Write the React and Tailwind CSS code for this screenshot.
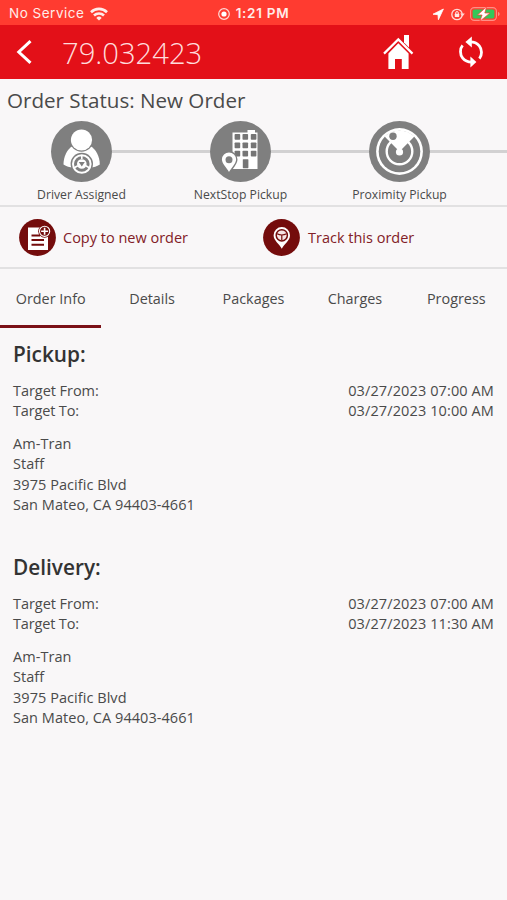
import React, { useState } from 'react';

const steps = [
    { label: "Driver Assigned", Icon: DriverIcon },
    { label: "NextStop Pickup", Icon: BuildingIcon },
    { label: "Proximity Pickup", Icon: RadarIcon },
];

const tabs = ["Order Info", "Details", "Packages", "Charges", "Progress"];

const address = ["Am-Tran", "Staff", "3975 Pacific Blvd", "San Mateo, CA 94403-4661"];

const stops = [
    { title: "Pickup:", from: "03/27/2023 07:00 AM", to: "03/27/2023 10:00 AM", address },
    { title: "Delivery:", from: "03/27/2023 07:00 AM", to: "03/27/2023 11:30 AM", address },
];

function WifiIcon() {
    return (
        <svg className="h-[14px] w-[18px]" viewBox="0 0 18 14" fill="none" stroke="#ffece9" strokeWidth="2.6">
            <path d="M1 5.2a11.4 11.4 0 0 1 16 0" />
            <path d="M4 8.5a7.2 7.2 0 0 1 10 0" />
            <path d="M9 13.6 6.3 10.9a3.8 3.8 0 0 1 5.4 0z" fill="#ffece9" stroke="none" />
        </svg>
    );
}

function StatusRightIcons() {
    return (
        <svg className="h-[16px] w-[68px]" viewBox="0 0 68 16" fill="none">
            <path d="M1 8.2 11.4 3 6.4 13.7 6 8.7z" fill="#fff" stroke="#fff" strokeWidth=".8" />
            <circle cx="25" cy="8.5" r="5.2" stroke="#ffd9d5" strokeWidth="1.3" />
            <path d="M28.2 7.6h4.6l-2.3 2.8z" fill="#ffd9d5" />
            <rect x="22.8" y="7.8" width="4.4" height="3.2" rx=".5" fill="#ffe9e6" />
            <path d="M23.7 8V6.9a1.3 1.3 0 0 1 2.6 0V8" stroke="#ffe9e6" />
            <rect x="38.6" y="1.6" width="25.8" height="12.8" rx="3.6" stroke="#ff8f86" strokeWidth="1.1" />
            <rect x="40.6" y="3.4" width="21.8" height="9.2" rx="1.8" fill="#34c759" />
            <path d="M66 6v4c1.1-.4 1.6-1.1 1.6-2s-.5-1.6-1.6-2z" fill="#ff8f86" />
            <path d="M54.6.8 45.5 9h4.6l-2.2 6.2L58 7h-5.2z" fill="#fff" stroke="#ff3b30" strokeWidth=".7" />
        </svg>
    );
}

function HomeIcon() {
    return (
        <svg className="h-[36px] w-[32px]" viewBox="0 0 32 36" fill="#fff">
            <path d="M22 1h5v12.400l-5-5z" />
            <path d="M2 19.600 16.300 5.400l14.200 14.200" fill="none" stroke="#fff" strokeWidth="2.200" />
            <path d="M16.300 9.200 26.600 19.600V35h-6.800V25h-6.800v10H6.400V19.600z" />
        </svg>
    );
}

function RefreshIcon() {
    return (
        <svg className="h-[32px] w-[26px]" viewBox="0 0 26 32" fill="none" stroke="#fff" strokeWidth="2.8">
            <path d="M4.600 9.400C1.800 12.600 1.800 18.600 4.700 22.200c2.200 2.700 5.300 4 9.300 3.900" />
            <path d="M12 5.900c4 0 7.100 1.300 9.300 3.900 2.900 3.600 2.900 9.500.1 12.800" />
            <path d="M13.800.600v10.800L7.400 6z" fill="#fff" stroke="none" />
            <path d="M12.400 20.600v10.800l6-5.400z" fill="#fff" stroke="none" />
        </svg>
    );
}

function DriverIcon() {
    return (
        <svg className="block h-[61px] w-[61px]" viewBox="0 0 61 61">
            <circle cx="30.5" cy="30.5" r="30.5" fill="#7f7f7f" />
            <path d="M12.500 43.500c0-8 3.500-15.500 9.500-18.800h17c6 3.300 9.800 10.800 9.800 18.800-3 1.900-6 2.800-9.300 3H22c-3.500-.2-6.500-1.100-9.500-3z" fill="#fff" />
            <circle cx="30.5" cy="19" r="11.8" fill="#7f7f7f" />
            <circle cx="30.5" cy="19" r="10.6" fill="#fff" />
            <circle cx="30.8" cy="43" r="11.2" fill="#7f7f7f" />
            <circle cx="30.8" cy="43" r="9.8" fill="#fff" />
            <circle cx="30.8" cy="43" r="6.3" fill="none" stroke="#7f7f7f" strokeWidth="3" />
            <path d="M30.800 34v4M22.800 47l4-2.300M38.800 47l-4-2.300" fill="none" stroke="#fff" strokeWidth="1.600" />
            <path d="M27.800 41h6l-3 4.500z" fill="#7f7f7f" />
        </svg>
    );
}

function BuildingIcon() {
    return (
        <svg className="block h-[61px] w-[61px]" viewBox="0 0 61 61">
            <circle cx="30.5" cy="30.5" r="30.5" fill="#7f7f7f" />
            <path d="M22.500 11.500h15V9h7.500v2.500h2.500V48h-25z" fill="#fff" />
            {[13, 21.5, 29.8].map((y) =>
                [24.6, 32.5, 40.8].map((x) => (
                    <rect key={`${x}-${y}`} x={x} y={y} width="5.6" height="5.8" rx=".8" fill="#757575" />
                ))
            )}
            <rect x="32.8" y="38.2" width="5.6" height="9" rx=".6" fill="#757575" />
            <path d="M19 52.600c-2.500-5.500-7.800-8.800-7.800-14a7.800 7.800 0 0 1 15.600 0c0 5.200-5.300 8.500-7.800 14z" fill="#fff" stroke="#7f7f7f" strokeWidth="1.400" />
            <circle cx="19" cy="38.8" r="3.5" fill="#7f7f7f" />
        </svg>
    );
}

function RadarIcon() {
    return (
        <svg className="block h-[61px] w-[61px]" viewBox="0 0 61 61">
            <circle cx="30.5" cy="30.5" r="30.5" fill="#7f7f7f" />
            <circle cx="30.5" cy="30.5" r="23.4" fill="#fff" />
            <circle cx="30.5" cy="30.5" r="20.8" fill="#7f7f7f" />
            <circle cx="30.5" cy="30.5" r="12.8" fill="none" stroke="#fff" strokeWidth="2.4" />
            <path d="M30.500 30.500 15.600 15.600A21.100 21.100 0 0 1 45.400 15.600z" fill="#fff" />
            <circle cx="30.5" cy="31" r="3.6" fill="#fff" />
            <circle cx="24" cy="15.2" r="3.7" fill="#7f7f7f" />
        </svg>
    );
}

function CopyIcon() {
    return (
        <svg className="h-[37px] w-[37px]" viewBox="0 0 37 37">
            <circle cx="18.5" cy="18.5" r="18.4" fill="#740c0c" />
            <path d="M9 8.500h14.500l5.500 6V31H9z" fill="#fff" />
            <path d="M12.500 16.400h8.500M12.500 21h12.500M12.500 25.700h12.500" stroke="#740c0c" strokeWidth="2" />
            <circle cx="25.6" cy="12.3" r="6.4" fill="#740c0c" />
            <circle cx="25.6" cy="12.3" r="5.1" fill="none" stroke="#fff" strokeWidth="1.1" />
            <path d="M25.600 8.800v7M22.100 12.300h7" stroke="#fff" strokeWidth="1.600" />
        </svg>
    );
}

function TrackIcon() {
    return (
        <svg className="h-[37px] w-[37px]" viewBox="0 0 37 37">
            <circle cx="18.5" cy="18.5" r="18.4" fill="#740c0c" />
            <path d="M18.800 29.800c-2.500-5-8.200-8.200-8.200-13.600a8.200 8.200 0 0 1 16.400 0c0 5.400-5.700 8.600-8.200 13.600z" fill="#fff" />
            <circle cx="18.8" cy="16.3" r="5.6" fill="#f6e6e6" stroke="#740c0c" strokeWidth="1.5" />
            <path d="M14 14.800q4.800 2.400 9.600 0M18.800 16v5.300" fill="none" stroke="#740c0c" strokeWidth="1.200" />
        </svg>
    );
}

function Stop({ stop }) {
    return (
        <section className="h-[213px] px-[13px] text-[14.5px] leading-[20.4px]">
            <h2 className="text-[20.8px] font-semibold leading-7 text-[#333]">{stop.title}</h2>
            <div className="mt-[13px] flex justify-between">
                <span className="tracking-[-0.05px]">Target From:</span>
                <span className="tracking-[0.11px]">{stop.from}</span>
            </div>
            <div className="flex justify-between">
                <span className="tracking-[-0.15px]">Target To:</span>
                <span className="tracking-[0.11px]">{stop.to}</span>
            </div>
            <div className="mt-3">
                {stop.address.map((line) => (
                    <p key={line} className="tracking-[0.05px]">{line}</p>
                ))}
            </div>
        </section>
    );
}

export default function App() {
    const [activeTab, setActiveTab] = useState("Order Info");

    return (
        <div className="h-[900px] w-[507px] overflow-hidden bg-[#f9f7f8] font-['Open_Sans',sans-serif] text-[#4a4a4a]">
            {/* Phone status bar */}
            <div className="grid h-[25px] grid-cols-3 items-center bg-[#ff3b30] pt-0.5 font-['Inter',sans-serif] text-[13.5px] text-[#ffece9]">
                <div className="flex items-center gap-1.5 pl-[9px]">
                    <span className="whitespace-nowrap tracking-[0.5px]">No Service</span>
                    <WifiIcon />
                </div>
                <div className="flex items-center justify-center gap-1.5">
                    <svg className="h-3 w-3" viewBox="0 0 12 12">
                        <circle cx="6" cy="6" r="5.3" fill="none" stroke="#ffd9d5" strokeWidth="1.2" />
                        <circle cx="6" cy="6" r="2.6" fill="#fff" />
                    </svg>
                    <span className="font-semibold tracking-[0.7px]">1:21 PM</span>
                </div>
                <div className="flex justify-end pr-[7px]">
                    <StatusRightIcons />
                </div>
            </div>

            {/* Header */}
            <header className="flex h-[54px] items-center bg-[#e31018] pl-4 pr-[23px] text-white">
                <button aria-label="Back">
                    <svg className="h-[24px] w-[16px]" viewBox="0 0 16 24" fill="none" stroke="#fff" strokeWidth="3">
                        <path d="M14.500 1.200 2.800 12l11.700 10.800" />
                    </svg>
                </button>
                <h1 className="ml-[30px] flex-1 pt-[3px] text-[29.2px] font-light text-[#ffdcdc]">79.032423</h1>
                <button aria-label="Home" className="mr-[44px]"><HomeIcon /></button>
                <button aria-label="Refresh"><RefreshIcon /></button>
            </header>

            {/* Order status */}
            <div className="h-[128px] border-b-2 border-[#e2e1e2]">
                <p className="h-[42px] pl-[7px] text-[20.6px] leading-[42px]">Order Status: New Order</p>
                <div className="flex w-[636px] pl-[2px]">
                    {steps.map(({ label, Icon }, index) => (
                        <div key={label} className="w-[159px] shrink-0">
                            <div className="flex items-center">
                                <span className={`h-[3px] flex-1 ${index === 0 ? "" : "bg-[#d2d1d2]"}`}></span>
                                <Icon />
                                <span className="h-[3px] flex-1 bg-[#d2d1d2]"></span>
                            </div>
                            <p className="mt-[3px] text-center text-[12.2px] leading-5">{label}</p>
                        </div>
                    ))}
                    <span className="mt-[29px] h-[3px] flex-1 bg-[#d2d1d2]"></span>
                </div>
            </div>

            {/* Actions */}
            <div className="flex h-[62px] items-center border-b-2 border-[#e2e1e2] text-[14.5px] text-[#822027]">
                <button className="flex w-[244px] items-center gap-[7px] pl-[19px]">
                    <CopyIcon />
                    <span className="pt-0.5">Copy to new order</span>
                </button>
                <button className="flex items-center gap-2 pl-[19px]">
                    <TrackIcon />
                    <span className="pt-0.5">Track this order</span>
                </button>
            </div>

            {/* Tabs */}
            <nav className="grid h-[59px] grid-cols-5 text-[14.4px]">
                {tabs.map((tab) => (
                    <button
                        key={tab}
                        onClick={() => setActiveTab(tab)}
                        className={`border-b-[3px] pt-[3px] ${activeTab === tab ? "border-[#7b1117]" : "border-transparent"}`}
                    >
                        {tab}
                    </button>
                ))}
            </nav>

            <main className="pt-3">
                {stops.map((stop) => (
                    <Stop key={stop.title} stop={stop} />
                ))}
            </main>
        </div>
    );
}
